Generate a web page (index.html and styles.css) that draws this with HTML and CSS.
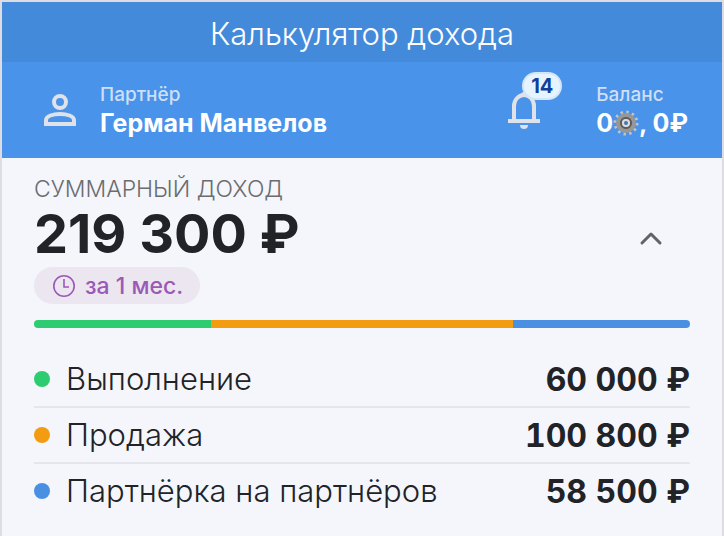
FILE: index.html
```html
<!DOCTYPE html>
<html lang="ru">
<head>
    <meta charset="UTF-8">
    <meta name="viewport" content="width=device-width, initial-scale=1.0">
    <title>Калькулятор дохода</title>
    <link rel="stylesheet" href="styles.css">
</head>
<body>
    <div class="app">
        <header>
            <h1 class="title">Калькулятор дохода</h1>
            <div class="profile">
                <svg class="user-icon" viewBox="0 0 32 32">
                    <circle cx="16" cy="8" r="6" />
                    <path d="M2 30v-4c0-4 7-6 14-6s14 2 14 6v4z" />
                </svg>
                <div class="partner">
                    <span class="label">Партнёр</span>
                    <strong class="value">Герман Манвелов</strong>
                </div>
                <button class="bell" type="button" aria-label="Уведомления">
                    <svg class="bell-icon" viewBox="0 0 32 40">
                        <path class="bell-line" d="M6 30V16a10 11 0 0 1 20 0v14M0 31h32" />
                        <path class="bell-fill" d="M12 35h8a4 4 0 0 1-8 0zM13 5a3 3 0 0 1 6 0z" />
                    </svg>
                    <span class="badge">14</span>
                </button>
                <div class="balance">
                    <span class="label">Баланс</span>
                    <strong class="value">0<svg class="gear" viewBox="0 0 26 26">
                        <circle class="gear-teeth" cx="13" cy="13" r="11" />
                        <circle class="gear-body" cx="13" cy="13" r="8" />
                        <circle class="gear-ring" cx="13" cy="13" r="5" />
                        <circle class="gear-hub" cx="13" cy="13" r="4" />
                        <circle class="gear-hole" cx="13" cy="13" r="2" />
                    </svg>, 0₽</strong>
                </div>
            </div>
        </header>

        <main>
            <div class="summary">
                <div>
                    <h2 class="summary-label">СУММАРНЫЙ ДОХОД</h2>
                    <p class="total">219 300 ₽</p>
                    <button class="period" type="button">
                        <svg class="clock" viewBox="0 0 24 24">
                            <circle cx="12" cy="12" r="10.2" />
                            <path d="M12 5v8h5" />
                        </svg>
                        за 1 мес.
                    </button>
                </div>
                <button class="toggle" type="button" aria-label="Свернуть" aria-expanded="true">
                    <svg class="chevron" viewBox="0 0 24 16">
                        <path d="M3 12l9-9 9 9" />
                    </svg>
                </button>
            </div>

            <div class="bar">
                <span class="green" style="width: 27%"></span>
                <span class="orange" style="width: 46%"></span>
                <span class="blue" style="width: 27%"></span>
            </div>

            <table class="income">
                <tr>
                    <th scope="row"><i class="dot green"></i>Выполнение</th>
                    <td>60 000 ₽</td>
                </tr>
                <tr>
                    <th scope="row"><i class="dot orange"></i>Продажа</th>
                    <td>100 800 ₽</td>
                </tr>
                <tr>
                    <th scope="row"><i class="dot blue"></i>Партнёрка на партнёров</th>
                    <td>58 500 ₽</td>
                </tr>
            </table>
        </main>
    </div>
</body>
</html>
```
FILE: styles.css
```css
* {
    box-sizing: border-box;
}
body {
    margin: 0;
    background: #f4f6fb;
    color: #212327;
    font-family: Inter, "Liberation Sans", sans-serif;
}
h1, h2, p {
    margin: 0;
}
button {
    border: 0;
    padding: 0;
    background: none;
    font: inherit;
    cursor: pointer;
}
svg {
    display: block;
    fill: none;
}
.app {
    min-height: 100vh;
    border: 2px solid #dcdce2;
    border-bottom: 0;
}

/* header */
header {
    background: #4993ea;
    color: #fff;
}
.title {
    background: #438bda;
    font-size: 31px;
    font-weight: 300;
    line-height: 60px;
    padding-top: 2px;
    height: 60px;
    text-align: center;
}
.profile {
    display: flex;
    align-items: center;
    height: 96px;
    padding: 0 34px 0 42px;
}
.user-icon {
    width: 32px;
    height: 32px;
    stroke: #dfe2e8;
    stroke-width: 4;
}
.partner {
    flex: 1;
    margin-left: 24px;
}
.label, .value {
    display: block;
    white-space: nowrap;
}
.label {
    color: #cfdff5;
    font-size: 19px;
    font-weight: 500;
    line-height: 26px;
}
.value {
    font-size: 25px;
    font-weight: 700;
    line-height: 30px;
}
.bell {
    position: relative;
    margin-right: 56px;
}
.bell-icon {
    width: 32px;
    height: 40px;
}
.bell-line {
    stroke: #dfe2e8;
    stroke-width: 4;
}
.bell-fill {
    fill: #dfe2e8;
}
.badge {
    position: absolute;
    top: -18px;
    left: 14px;
    width: 40px;
    height: 28px;
    border: 2px solid #d3e6f8;
    border-radius: 14px;
    background: #e6f4ff;
    color: #133f9b;
    font-size: 20px;
    font-weight: 700;
    line-height: 24px;
    text-align: center;
}
.gear {
    display: inline-block;
    width: 26px;
    height: 26px;
    vertical-align: -4px;
}
.gear-teeth {
    stroke: #c4c4c2;
    stroke-width: 3;
    stroke-dasharray: 2.4 3.36;
}
.gear-body {
    fill: #777;
    stroke: #969796;
    stroke-width: 4;
}
.gear-ring {
    fill: #8b8b8a;
    stroke: #5c5c5c;
    stroke-width: 2;
}
.gear-hub {
    fill: #ddd;
}
.gear-hole {
    fill: #4077b5;
}

/* income */
main {
    padding: 16px 32px;
}
.summary {
    display: flex;
    align-items: center;
    justify-content: space-between;
}
.summary-label {
    color: #6b6c70;
    font-size: 23px;
    font-weight: 300;
    line-height: 30px;
}
.total {
    font-size: 54px;
    font-weight: 700;
    line-height: 60px;
}
.period {
    display: flex;
    align-items: center;
    gap: 9px;
    height: 37px;
    margin-top: 3px;
    padding: 0 17px 0 18px;
    border-radius: 19px;
    background: #ebe6f0;
    color: #9b59b6;
    font-size: 23px;
    font-weight: 500;
}
.clock {
    width: 24px;
    height: 24px;
    stroke: #9b59b6;
    stroke-width: 1.6;
}
.toggle {
    padding: 16px 27px;
}
.chevron {
    width: 24px;
    height: 16px;
    stroke: #626367;
    stroke-width: 3;
    stroke-linecap: round;
    stroke-linejoin: round;
}
.bar {
    display: flex;
    height: 8px;
    margin: 16px 0 24px;
    border-radius: 4px;
    overflow: hidden;
}
.green {
    background: #2ecc71;
}
.orange {
    background: #f39c12;
}
.blue {
    background: #4990e2;
}
.income {
    width: 100%;
    border-collapse: separate;
    border-spacing: 0;
    font-size: 32px;
}
.income th, .income td {
    height: 56px;
    padding: 0;
    border-bottom: 2px solid #e4e6eb;
    white-space: nowrap;
}
.income tr:last-child > * {
    border-color: transparent;
}
.income th {
    padding-bottom: 2px;
    font-size: 31px;
    font-weight: 300;
    text-align: left;
}
.income td {
    font-weight: 700;
    font-variant-numeric: tabular-nums;
    text-align: right;
}
.dot {
    display: inline-block;
    width: 16px;
    height: 16px;
    margin-right: 16px;
    border-radius: 50%;
    vertical-align: 3px;
}
```
